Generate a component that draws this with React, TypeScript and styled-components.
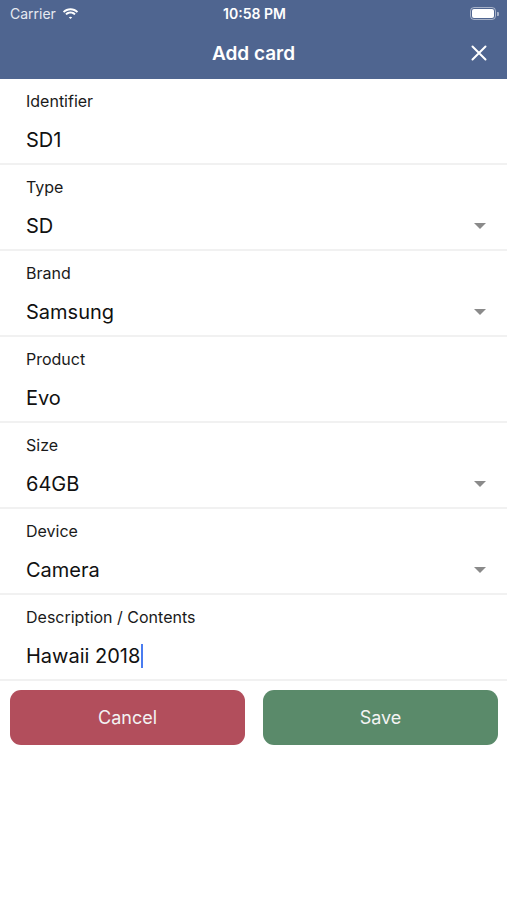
import styled, { createGlobalStyle } from "styled-components";

const GlobalStyle = createGlobalStyle`
  html, body {
    margin: 0;
    padding: 0;
    background: #ffffff;
  }
  body {
    font-family: Inter, "Liberation Sans", Arial, sans-serif;
    color: #111111;
  }
`;

const Screen = styled.div`
  width: 507px;
  min-height: 900px;
  background: #ffffff;
`;

const Header = styled.header`
  background: #4f6590;
  color: #ffffff;
`;

const StatusBar = styled.div`
  height: 27px;
  display: grid;
  grid-template-columns: 1fr auto 1fr;
  align-items: center;
  padding: 0 8px 0 10px;
  font-size: 14px;
`;

const Carrier = styled.div`
  display: flex;
  align-items: center;
  gap: 6px;
  color: #e6e9f0;
`;

const Clock = styled.div`
  font-weight: 600;
`;

const Battery = styled.div`
  justify-self: end;
  display: flex;
  align-items: center;
`;

const BatteryBody = styled.div`
  width: 22px;
  height: 9px;
  border: 1.5px solid rgba(255, 255, 255, 0.5);
  border-radius: 4px;
  padding: 1px;
  display: flex;
  div {
    flex: 1;
    background: #ffffff;
    border-radius: 2px;
  }
`;

const BatteryTip = styled.div`
  width: 2px;
  height: 4px;
  margin-left: 1px;
  background: rgba(255, 255, 255, 0.5);
  border-radius: 0 1px 1px 0;
`;

const NavBar = styled.div`
  position: relative;
  height: 52px;
  display: flex;
  align-items: center;
  justify-content: center;
`;

const Title = styled.h1`
  margin: 0;
  font-size: 19px;
  font-weight: 600;
`;

const CloseButton = styled.button`
  position: absolute;
  right: 19px;
  top: 17px;
  width: 18px;
  height: 18px;
  padding: 0;
  border: none;
  background: none;
  display: flex;
  align-items: center;
  justify-content: center;
`;

const Form = styled.div`
  display: flex;
  flex-direction: column;
`;

const Field = styled.div`
  position: relative;
  padding: 10px 26px 9px;
  border-bottom: 2px solid #f1f1f1;
`;

const Label = styled.div`
  font-size: 16px;
  line-height: 24px;
  color: #1a1a1a;
`;

const Value = styled.div`
  margin-top: 13px;
  font-size: 20px;
  line-height: 28px;
  color: #111111;
  display: flex;
  align-items: center;
`;

const Cursor = styled.span`
  display: inline-block;
  width: 2px;
  height: 24px;
  background: #4a7cf0;
  margin-left: 1px;
`;

const Caret = styled.span`
  position: absolute;
  right: 21px;
  bottom: 20px;
  width: 0;
  height: 0;
  border-left: 6px solid transparent;
  border-right: 6px solid transparent;
  border-top: 6px solid #8a8a8a;
`;

const Actions = styled.div`
  display: grid;
  grid-template-columns: 1fr 1fr;
  gap: 18px;
  padding: 9px 9px 0 10px;
`;

const ActionButton = styled.button<{ $tone: string }>`
  height: 55px;
  border: none;
  border-radius: 11px;
  background: ${(p) => p.$tone};
  color: #f3f3f3;
  font-family: Inter, "Liberation Sans", Arial, sans-serif;
  font-size: 18px;
`;

const fields = [
  { label: "Identifier", value: "SD1", select: false },
  { label: "Type", value: "SD", select: true },
  { label: "Brand", value: "Samsung", select: true },
  { label: "Product", value: "Evo", select: false },
  { label: "Size", value: "64GB", select: true },
  { label: "Device", value: "Camera", select: true },
  { label: "Description / Contents", value: "Hawaii 2018", select: false, focused: true },
];

export default function App() {
  return (
    <Screen>
      <GlobalStyle />
      <Header>
        <StatusBar>
          <Carrier>
            Carrier
            <svg width="17" height="12" viewBox="0 0 17 12">
              <path d="M8.5 2.2c2.4 0 4.6.9 6.3 2.5l1.3-1.3C14.1 1.4 11.4.3 8.5.3S2.9 1.4.9 3.4l1.3 1.3c1.7-1.6 3.900-2.5 6.3-2.5z" fill="#fff" />
              <path d="M8.5 5.5c1.5 0 2.8.6 3.9 1.5l1.3-1.3C12.3 4.4 10.5 3.6 8.5 3.6S4.7 4.4 3.3 5.7l1.3 1.3c1.1-.9 2.4-1.5 3.9-1.5z" fill="#fff" />
              <path d="M8.5 8.7c.7 0 1.2.2 1.7.6L8.5 11 6.8 9.3c.5-.4 1-.6 1.7-.6z" fill="#fff" />
            </svg>
          </Carrier>
          <Clock>10:58 PM</Clock>
          <Battery>
            <BatteryBody>
              <div />
            </BatteryBody>
            <BatteryTip />
          </Battery>
        </StatusBar>
        <NavBar>
          <Title>Add card</Title>
          <CloseButton aria-label="Close">
            <svg width="16" height="16" viewBox="0 0 16 16">
              <path d="M1.5 1.5l13 13M14.5 1.5l-13 13" stroke="#fff" strokeWidth="2" strokeLinecap="round" />
            </svg>
          </CloseButton>
        </NavBar>
      </Header>
      <Form>
        {fields.map((f) => (
          <Field key={f.label}>
            <Label>{f.label}</Label>
            <Value>
              {f.value}
              {f.focused && <Cursor />}
            </Value>
            {f.select && <Caret />}
          </Field>
        ))}
      </Form>
      <Actions>
        <ActionButton $tone="#b24e5c">Cancel</ActionButton>
        <ActionButton $tone="#5a8a6a">Save</ActionButton>
      </Actions>
    </Screen>
  );
}
